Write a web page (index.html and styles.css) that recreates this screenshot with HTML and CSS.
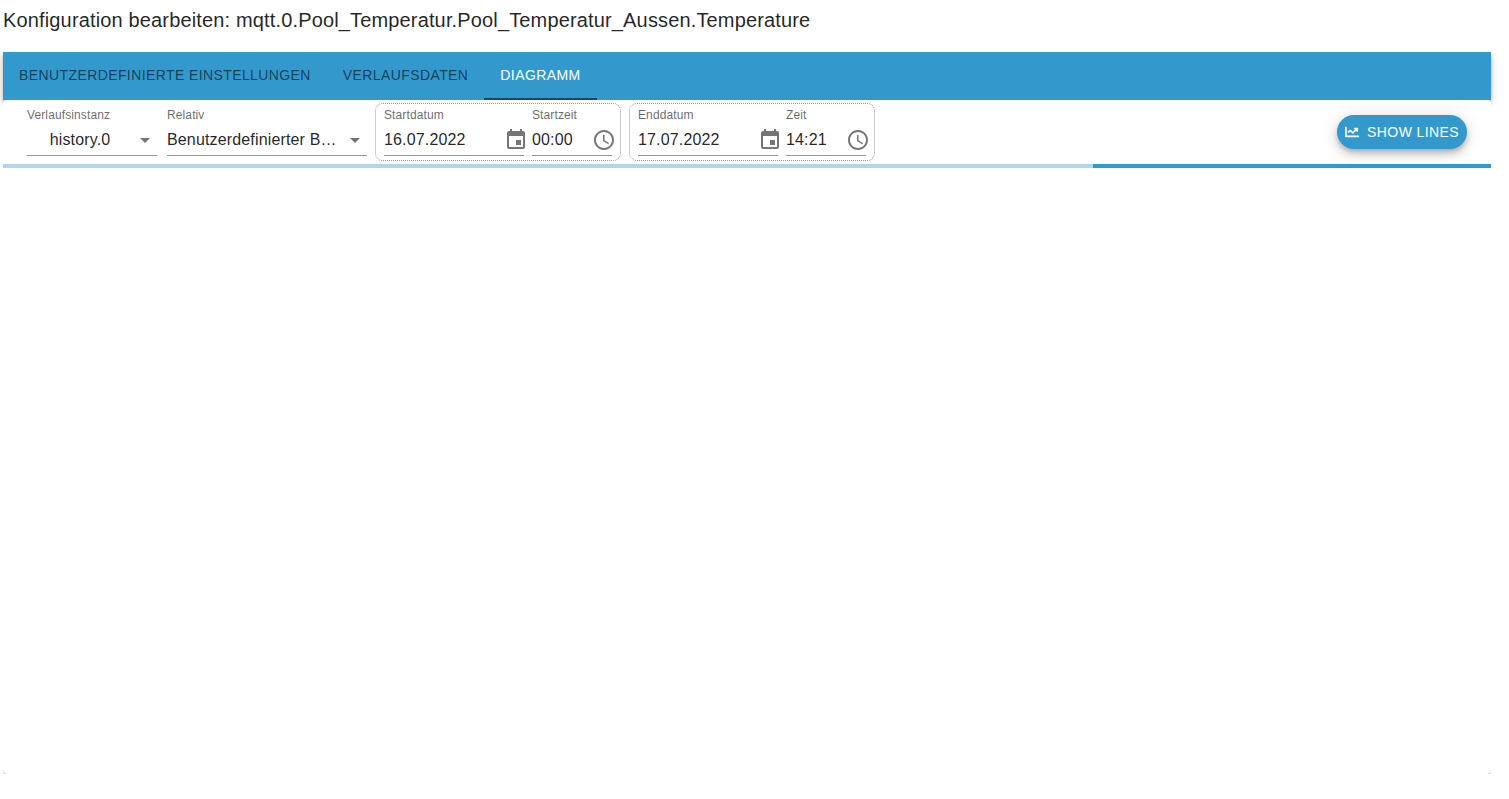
FILE: index.html
```
<!DOCTYPE html>
<html lang="de">
  <head>
    <meta charset="UTF-8" />
    <meta name="viewport" content="width=device-width, initial-scale=1.0" />
    <title>Konfiguration bearbeiten</title>
    <link rel="stylesheet" href="styles.css">
  </head>
  <body>
    <main>
      <h1>Konfiguration bearbeiten: mqtt.0.Pool_Temperatur.Pool_Temperatur_Aussen.Temperature</h1>
      <nav class="tabs" role="tablist">
        <button class="tab" type="button" role="tab">Benutzerdefinierte Einstellungen</button>
        <button class="tab" type="button" role="tab">Verlaufsdaten</button>
        <button class="tab active" type="button" role="tab" aria-selected="true">Diagramm</button>
      </nav>
      <section class="content">
        <div class="paper">
          <form class="toolbar">
            <div class="field field-instance">
              <label for="instance">Verlaufsinstanz</label>
              <div class="control">
                <select id="instance">
                  <option>history.0</option>
                </select>
                <svg class="arrow" viewBox="0 0 24 24"><path d="M7 10l5 5 5-5z" /></svg>
              </div>
            </div>
            <div class="field field-relative">
              <label for="relative">Relativ</label>
              <div class="control">
                <select id="relative">
                  <option>Benutzerdefinierter Bereich</option>
                </select>
                <svg class="arrow" viewBox="0 0 24 24"><path d="M7 10l5 5 5-5z" /></svg>
              </div>
            </div>
            <div class="range">
              <div class="field field-date">
                <label for="start-date">Startdatum</label>
                <div class="control">
                  <input id="start-date" type="text" value="16.07.2022" />
                  <button class="icon-button" type="button" aria-label="Startdatum">
                    <svg viewBox="0 0 24 24"><path d="M17 12h-5v5h5v-5zM16 1v2H8V1H6v2H5c-1.11 0-1.99.9-1.99 2L3 19c0 1.1.89 2 2 2h14c1.1 0 2-.9 2-2V5c0-1.1-.9-2-2-2h-1V1h-2zm3 18H5V8h14v11z" /></svg>
                  </button>
                </div>
              </div>
              <div class="field field-time">
                <label for="start-time">Startzeit</label>
                <div class="control">
                  <input id="start-time" type="text" value="00:00" />
                  <button class="icon-button" type="button" aria-label="Startzeit">
                    <svg viewBox="0 0 24 24"><path d="M11.99 2C6.47 2 2 6.48 2 12s4.47 10 9.99 10C17.52 22 22 17.52 22 12S17.52 2 11.99 2zM12 20c-4.42 0-8-3.58-8-8s3.58-8 8-8 8 3.58 8 8-3.58 8-8 8z" /><path d="M12.5 7H11v6l5.25 3.15.75-1.23-4.5-2.67z" /></svg>
                  </button>
                </div>
              </div>
            </div>
            <div class="range">
              <div class="field field-date">
                <label for="end-date">Enddatum</label>
                <div class="control">
                  <input id="end-date" type="text" value="17.07.2022" />
                  <button class="icon-button" type="button" aria-label="Enddatum">
                    <svg viewBox="0 0 24 24"><path d="M17 12h-5v5h5v-5zM16 1v2H8V1H6v2H5c-1.11 0-1.99.9-1.99 2L3 19c0 1.1.89 2 2 2h14c1.1 0 2-.9 2-2V5c0-1.1-.9-2-2-2h-1V1h-2zm3 18H5V8h14v11z" /></svg>
                  </button>
                </div>
              </div>
              <div class="field field-time">
                <label for="end-time">Zeit</label>
                <div class="control">
                  <input id="end-time" type="text" value="14:21" />
                  <button class="icon-button" type="button" aria-label="Zeit">
                    <svg viewBox="0 0 24 24"><path d="M11.99 2C6.47 2 2 6.48 2 12s4.47 10 9.99 10C17.52 22 22 17.52 22 12S17.52 2 11.99 2zM12 20c-4.42 0-8-3.58-8-8s3.58-8 8-8 8 3.58 8 8-3.58 8-8 8z" /><path d="M12.5 7H11v6l5.25 3.15.75-1.23-4.5-2.67z" /></svg>
                  </button>
                </div>
              </div>
            </div>
            <button class="show-lines" type="button">
              <svg viewBox="0 0 512 512"><path d="M496 384H64V80c0-8.84-7.16-16-16-16H16C7.16 64 0 71.16 0 80v336c0 17.67 14.33 32 32 32h464c8.84 0 16-7.16 16-16v-32c0-8.84-7.16-16-16-16zM464 96H345.94c-21.38 0-32.09 25.85-16.97 40.97l32.4 32.4L288 242.75l-73.37-73.37c-12.5-12.5-32.76-12.5-45.25 0l-68.69 68.69c-6.25 6.25-6.25 16.38 0 22.63l22.62 22.62c6.25 6.25 16.38 6.25 22.63 0L192 237.25l73.37 73.37c12.5 12.5 32.76 12.5 45.25 0l96-96 32.4 32.4c15.12 15.12 40.97 4.41 40.97-16.97V112c.01-8.84-7.15-16-15.99-16z" /></svg>
              Show lines
            </button>
          </form>
          <div class="progress" role="progressbar" aria-label="Diagramm">
            <div class="progress-bar" style="width: 26.75%"></div>
          </div>
        </div>
      </section>
    </main>
  </body>
</html>
```

FILE: styles.css
```
* {
  box-sizing: border-box;
}

body {
  margin: 0;
  font-family: "Liberation Sans", Arial, sans-serif;
  font-size: 16px;
  letter-spacing: 0.00938em;
  color: rgba(0, 0, 0, 0.87);
  background-color: #fff;
}

main {
  display: flex;
  flex-direction: column;
  height: 100vh;
  padding: 4px 18px 25px 3px;
}

h1 {
  margin: 0 0 16px;
  font-size: 20px;
  font-weight: 400;
  line-height: 32px;
  letter-spacing: 0.0075em;
}

button,
input,
select {
  margin: 0;
  padding: 0;
  border: 0;
  font: inherit;
  letter-spacing: inherit;
  color: inherit;
  background: none;
}

button {
  cursor: pointer;
}

svg {
  display: block;
  fill: currentColor;
}

/* tabs */
.tabs {
  display: flex;
  height: 48px;
  flex-shrink: 0;
  background-color: #3399cc;
  box-shadow: 0 2px 4px -1px rgba(0, 0, 0, 0.2), 0 4px 5px 0 rgba(0, 0, 0, 0.14), 0 1px 10px 0 rgba(0, 0, 0, 0.12);
  clip-path: inset(0 -18px -18px -3px);
}

.tab {
  padding: 0 16px 2px;
  font-size: 14px;
  letter-spacing: 0.02857em;
  text-transform: uppercase;
  color: rgba(0, 0, 0, 0.6);
}

.tab.active {
  color: #fff;
  box-shadow: inset 0 -2px #164477;
}

/* chart panel */
.content {
  position: relative;
  flex: 1;
  overflow: hidden;
}

.paper {
  height: 100%;
  border-radius: 4px;
  background-color: #fff;
  box-shadow: 0 2px 1px -1px rgba(0, 0, 0, 0.2), 0 1px 1px 0 rgba(0, 0, 0, 0.14), 0 1px 3px 0 rgba(0, 0, 0, 0.12);
}

.toolbar {
  display: flex;
  align-items: center;
  gap: 8px;
  height: 64px;
  padding: 0 24px;
}

.field label {
  display: block;
  height: 16px;
  font-size: 12px;
  line-height: 14px;
  letter-spacing: 0.00938em;
  color: rgba(0, 0, 0, 0.6);
}

.field-instance {
  width: 130px;
  margin-right: 2px;
}

.field-relative {
  width: 200px;
}

.field-date {
  width: 140px;
}

.field-time {
  width: 80px;
}

.control {
  display: flex;
  align-items: center;
  position: relative;
  height: 32px;
  border-bottom: 1px solid rgba(0, 0, 0, 0.42);
}

.control input {
  flex: 1;
  min-width: 0;
  height: 31px;
}

.control select {
  width: 100%;
  height: 31px;
  padding-right: 24px;
  appearance: none;
  overflow: hidden;
  white-space: nowrap;
  text-overflow: ellipsis;
}

.field-instance select {
  text-align: center;
}

.arrow {
  position: absolute;
  right: 0;
  width: 24px;
  height: 24px;
  color: rgba(0, 0, 0, 0.54);
  pointer-events: none;
}

.icon-button {
  flex-shrink: 0;
  margin-right: -4px;
  color: rgba(0, 0, 0, 0.54);
}

.icon-button svg {
  width: 24px;
  height: 24px;
}

.range {
  display: flex;
  gap: 8px;
  padding: 4px 8px;
  border: 1px dotted rgba(0, 0, 0, 0.4);
  border-radius: 8px;
}

.show-lines {
  display: flex;
  align-items: center;
  gap: 8px;
  height: 34px;
  margin-left: auto;
  padding: 0 8px;
  border-radius: 17px;
  font-size: 14px;
  letter-spacing: 0.02857em;
  text-transform: uppercase;
  white-space: nowrap;
  color: #fff;
  background-color: #3399cc;
  box-shadow: 0 3px 5px -1px rgba(0, 0, 0, 0.2), 0 6px 10px 0 rgba(0, 0, 0, 0.14), 0 1px 18px 0 rgba(0, 0, 0, 0.12);
}

.show-lines svg {
  width: 14px;
  height: 14px;
}

/* loading bar */
.progress {
  height: 4px;
  background-color: #afd6ea;
}

.progress-bar {
  height: 100%;
  margin-left: auto;
  background-color: #3399cc;
}
```
